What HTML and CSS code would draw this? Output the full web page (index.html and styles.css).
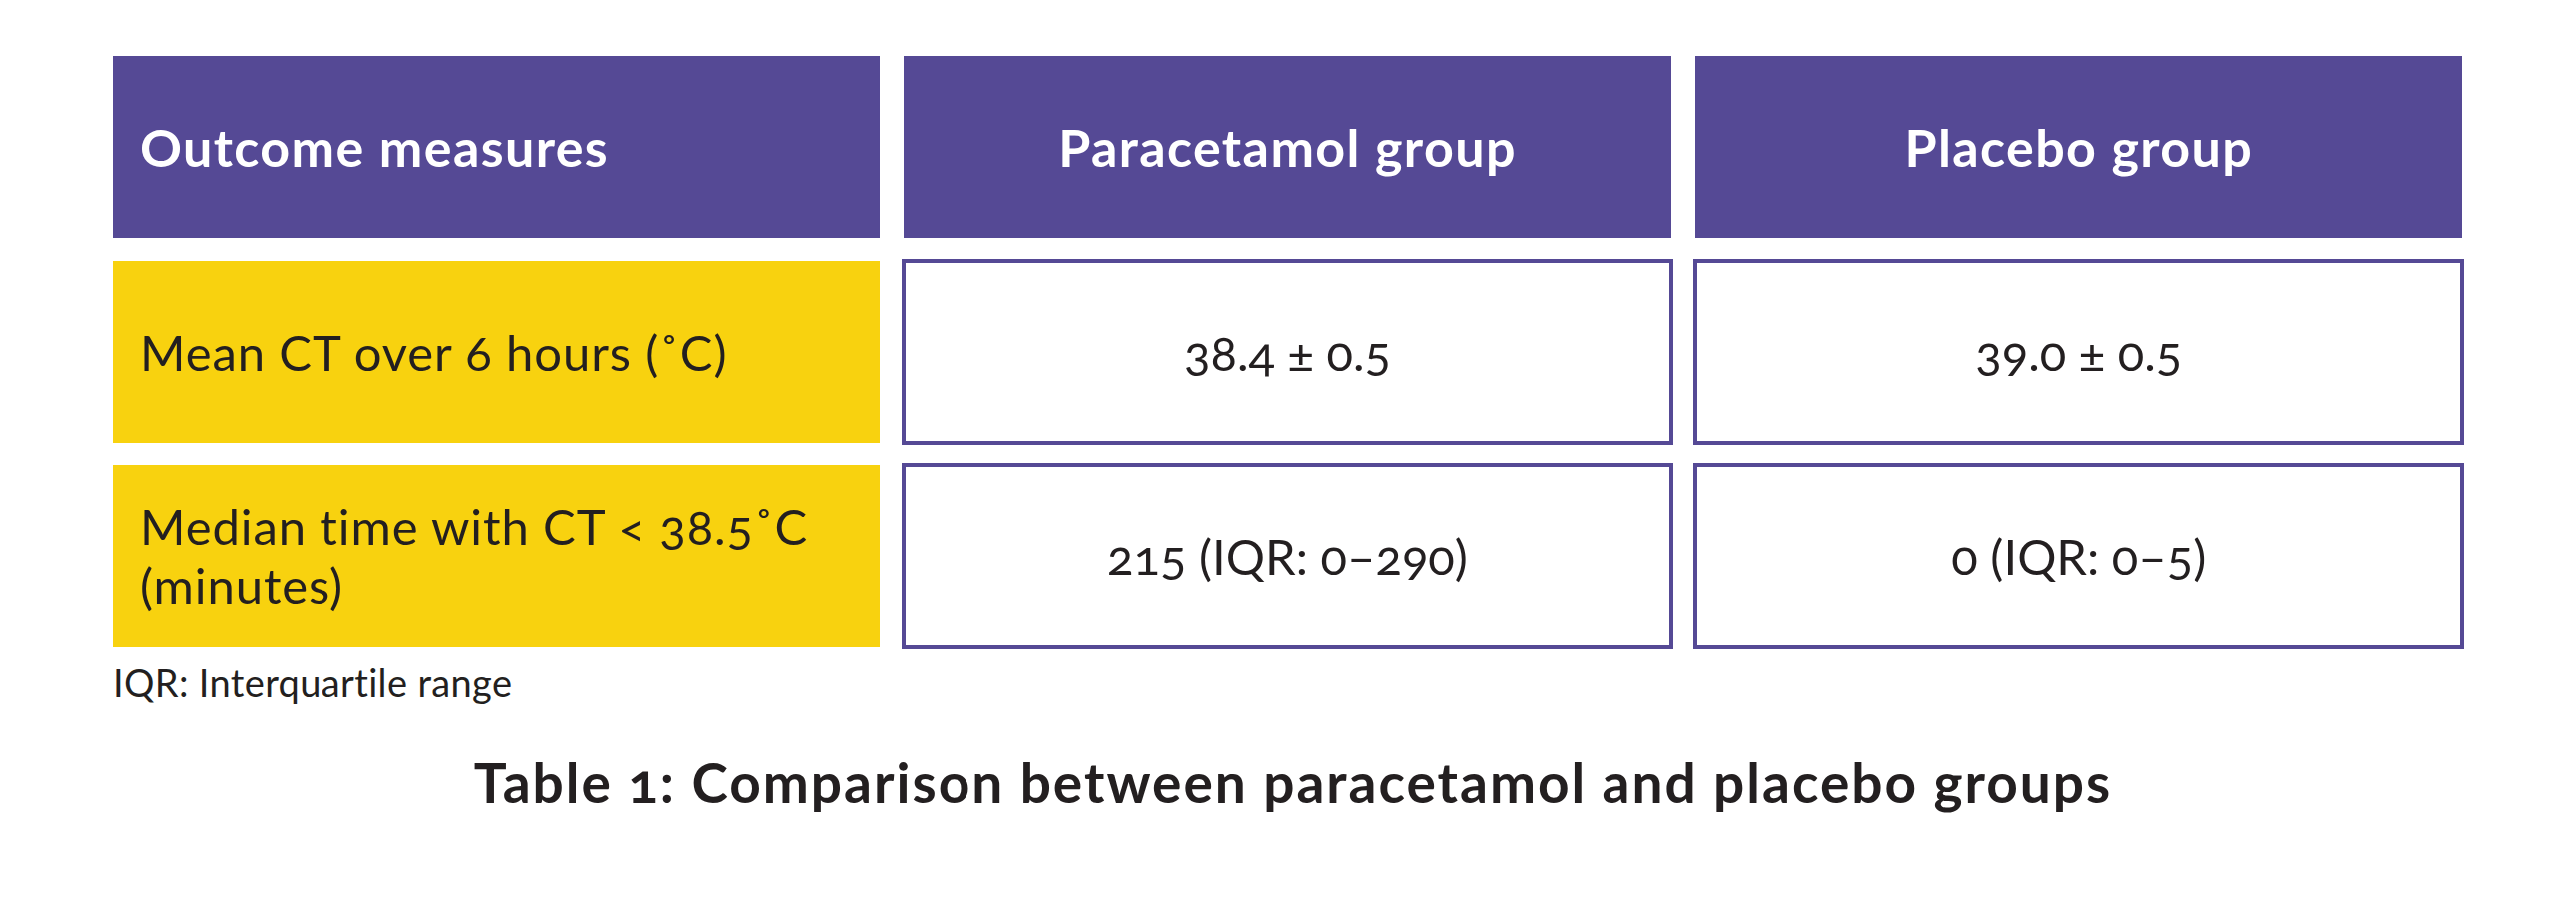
FILE: index.html
```html
<!DOCTYPE html>
<html lang="en">
<head>
<meta charset="utf-8">
<title>Table 1: Comparison between paracetamol and placebo groups</title>
<link rel="stylesheet" href="styles.css">
</head>
<body>
<main class="page">
  <div class="table">
    <div class="cell head head-left">Outcome measures</div>
    <div class="cell head">Paracetamol group</div>
    <div class="cell head">Placebo group</div>

    <div class="cell label">Mean CT over 6 hours (˚C)</div>
    <div class="cell value">38.4 ± 0.5</div>
    <div class="cell value">39.0 ± 0.5</div>

    <div class="cell label">Median time with CT &lt; 38.5˚C<br>(minutes)</div>
    <div class="cell value">215 (IQR: 0–290)</div>
    <div class="cell value">0 (IQR: 0–5)</div>
  </div>
  <p class="note">IQR: Interquartile range</p>
  <p class="caption">Table 1: Comparison between paracetamol and placebo groups</p>
</main>
</body>
</html>
```
FILE: styles.css
```css
html, body {
  margin: 0;
  padding: 0;
  background: #ffffff;
}

body {
  font-family: Lato, "Open Sans", "Liberation Sans", sans-serif;
  color: #231f20;
  font-variant-numeric: oldstyle-nums;
}

.page {
  padding: 56px 114px 0 113px;
}

.table {
  display: grid;
  grid-template-columns: repeat(3, 1fr);
  grid-template-rows: 182px 182px 182px;
  column-gap: 24px;
  row-gap: 23px;
}

.cell {
  display: flex;
  align-items: center;
  box-sizing: border-box;
  font-size: 49px;
  line-height: 59px;
}

.head {
  background: #554995;
  color: #ffffff;
  font-weight: 700;
  font-size: 52px;
  letter-spacing: 1.4px;
  justify-content: center;
  text-align: center;
}

.head-left {
  justify-content: flex-start;
  text-align: left;
  padding-left: 27px;
}

.label {
  background: #f8d20f;
  padding-left: 27px;
  letter-spacing: 0.9px;
}

.value {
  margin: -2px;
  border: 4px solid #554995;
  background: #ffffff;
  justify-content: center;
  text-align: center;
}

.note {
  margin: 13px 0 0 0;
  font-size: 38px;
  line-height: 1.2;
  letter-spacing: 0.35px;
}

.caption {
  margin: 43px 0 0 0;
  padding-left: 11px;
  font-size: 55px;
  line-height: 1.2;
  font-weight: 700;
  letter-spacing: 2px;
  text-align: center;
}
```
